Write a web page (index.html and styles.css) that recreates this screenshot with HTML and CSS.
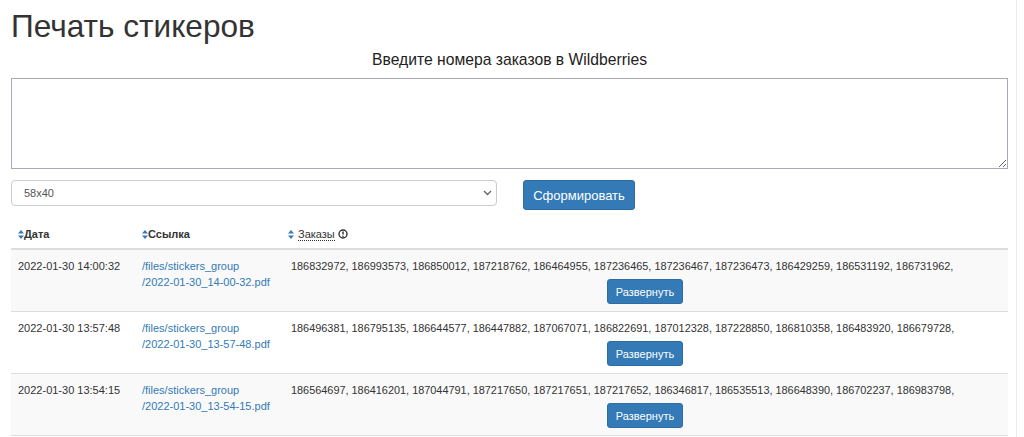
FILE: index.html
```html
<!DOCTYPE html>
<html lang="ru">
<head>
<meta charset="utf-8">
<title>Печать стикеров</title>
<link rel="stylesheet" href="styles.css">
</head>
<body>
<div class="page">
  <h1 class="title">Печать стикеров</h1>
  <div class="subtitle">Введите номера заказов в Wildberries</div>
  <textarea class="orders-input"></textarea>
  <div class="controls">
    <div class="select-wrap">
      <select class="size-select"><option>58x40</option></select>
      <svg class="chevron" width="9" height="6" viewBox="0 0 9 6"><path d="M1 1l3.5 3.5L8 1" fill="none" stroke="#666" stroke-width="1.4"/></svg>
    </div>
    <button class="btn btn-main">Сформировать</button>
  </div>
  <table class="tbl">
    <thead>
      <tr>
        <th class="c1"><svg class="sort" width="6" height="9" viewBox="0 0 6 9"><path d="M3 0L6 3.5H0z M3 9L0 5.5H6z" fill="#337ab7"/></svg>Дата</th>
        <th class="c2"><svg class="sort" width="6" height="9" viewBox="0 0 6 9"><path d="M3 0L6 3.5H0z M3 9L0 5.5H6z" fill="#337ab7"/></svg>Ссылка</th>
        <th class="c3 plain"><svg class="sort sp" width="6" height="9" viewBox="0 0 6 9"><path d="M3 0L6 3.5H0z M3 9L0 5.5H6z" fill="#337ab7"/></svg><span class="abbr">Заказы</span> <svg class="info" width="10" height="10" viewBox="0 0 10 10"><circle cx="5" cy="5" r="4" fill="none" stroke="#333" stroke-width="1.4"/><path d="M5 2.4v3.2" stroke="#333" stroke-width="1.5"/><circle cx="5" cy="7.2" r="0.8" fill="#333"/></svg></th>
      </tr>
    </thead>
    <tbody>
      <tr>
        <td>2022-01-30 14:00:32</td>
        <td><a href="#">/files/stickers_group<br>/2022-01-30_14-00-32.pdf</a></td>
        <td class="orders">186832972, 186993573, 186850012, 187218762, 186464955, 187236465, 187236467, 187236473, 186429259, 186531192, 186731962,<div class="center"><button class="btn btn-sm">Развернуть</button></div></td>
      </tr>
      <tr>
        <td>2022-01-30 13:57:48</td>
        <td><a href="#">/files/stickers_group<br>/2022-01-30_13-57-48.pdf</a></td>
        <td class="orders">186496381, 186795135, 186644577, 186447882, 187067071, 186822691, 187012328, 187228850, 186810358, 186483920, 186679728,<div class="center"><button class="btn btn-sm">Развернуть</button></div></td>
      </tr>
      <tr>
        <td>2022-01-30 13:54:15</td>
        <td><a href="#">/files/stickers_group<br>/2022-01-30_13-54-15.pdf</a></td>
        <td class="orders">186564697, 186416201, 187044791, 187217650, 187217651, 187217652, 186346817, 186535513, 186648390, 186702237, 186983798,<div class="center"><button class="btn btn-sm">Развернуть</button></div></td>
      </tr>
    </tbody>
  </table>
</div>
</body>
</html>
```

FILE: styles.css
```css
html, body {
  margin: 0;
  padding: 0;
  background: #fff;
}
body {
  font-family: "Liberation Sans", Arial, sans-serif;
  color: #333;
  font-size: 11px;
  overflow: hidden;
}
.page {
  width: 997px;
  min-height: 437px;
  padding: 9px 8px 0 11px;
  border-right: 1px solid #ececec;
  box-sizing: content-box;
}
.title {
  margin: 0;
  font-size: 31.6px;
  font-weight: normal;
  line-height: 34px;
  color: #333;
}
.subtitle {
  text-align: center;
  font-size: 15.7px;
  line-height: 20px;
  margin-top: 7px;
  color: #222;
}
.orders-input {
  display: block;
  width: 997px;
  height: 91px;
  box-sizing: border-box;
  margin-top: 8px;
  border: 1px solid #a9a9bc;
  border-radius: 0;
  padding: 2px;
  font-family: inherit;
  outline: none;
}
.controls {
  display: flex;
  align-items: flex-start;
  gap: 26px;
  margin-top: 11px;
}
.select-wrap {
  position: relative;
  width: 486px;
}
.size-select {
  display: block;
  width: 486px;
  height: 26px;
  box-sizing: border-box;
  appearance: none;
  -webkit-appearance: none;
  background: #fff;
  border: 1px solid #ccc;
  border-radius: 4px;
  padding: 0 12px;
  font-family: inherit;
  font-size: 11px;
  color: #555;
}
.chevron {
  position: absolute;
  right: 5px;
  top: 10px;
}
.btn {
  font-family: inherit;
  color: #fff;
  background: #337ab7;
  border: 1px solid #2e6da4;
  border-radius: 3px;
  cursor: pointer;
}
.btn-main {
  width: 112px;
  height: 30px;
  font-size: 13px;
  padding: 0;
}
.btn-sm {
  width: 76px;
  height: 25px;
  font-size: 11px;
  padding: 0;
}
.tbl {
  width: 997px;
  border-collapse: collapse;
  margin-top: 8px;
  table-layout: fixed;
}
.tbl th, .tbl td {
  text-align: left;
  vertical-align: top;
  line-height: 16px;
  padding: 8px 7px;
}
.tbl th {
  font-weight: bold;
  border-bottom: 2px solid #ddd;
  padding-top: 8px;
  padding-bottom: 6px;
}
.tbl th.plain {
  font-weight: normal;
}
.c1 { width: 110px; }
.c2 { width: 132px; }
.c3 { width: auto; }
.tbl td {
  border-top: 1px solid #ddd;
  padding-bottom: 7px;
}
.tbl tbody tr:nth-child(odd) td {
  background: #f9f9f9;
}
.tbl tbody tr:last-child td {
  border-bottom: 1px solid #ddd;
}
.tbl td.orders {
  padding-left: 10px;
  font-size: 10.9px;
}
.tbl a {
  color: #337ab7;
  text-decoration: none;
}
.sort {
  vertical-align: -1px;
}
.sort.sp {
  margin-right: 4px;
}
.abbr {
  border-bottom: 1px dotted #333;
}
.info {
  vertical-align: -1px;
}
.center {
  display: flex;
  justify-content: center;
  margin-top: 5px;
  padding-right: 2px;
}
```
